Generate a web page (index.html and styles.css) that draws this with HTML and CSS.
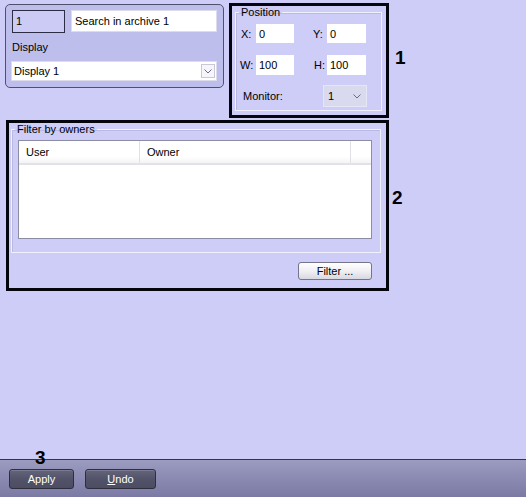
FILE: index.html
```html
<!DOCTYPE html>
<html>
<head>
<meta charset="utf-8">
<link rel="stylesheet" href="styles.css">
</head>
<body>
<div class="page">
  <div class="main">
    <div class="top-row">
      <div class="panel">
        <div class="id-row">
          <div class="field id">1</div>
          <div class="field name">Search in archive 1</div>
        </div>
        <div class="label">Display</div>
        <div class="select display">
          <span>Display 1</span>
          <span class="arrow"><svg width="8" height="5" viewBox="0 0 8 5"><polyline points="0.5,0.5 4,4 7.5,0.5" fill="none" stroke="#6a6a88" stroke-width="1"/></svg></span>
        </div>
      </div>
      <div class="box box1">
        <fieldset class="group pos">
          <legend>Position</legend>
          <div class="prow r1">
            <span class="lbl l1">X:</span><span class="inp i1">0</span>
            <span class="lbl l2">Y:</span><span class="inp i2">0</span>
          </div>
          <div class="prow r2">
            <span class="lbl l1">W:</span><span class="inp i1">100</span>
            <span class="lbl l2">H:</span><span class="inp i2">100</span>
          </div>
          <div class="mrow">
            <span class="mlbl">Monitor:</span>
            <span class="msel"><span>1</span><svg width="8" height="5" viewBox="0 0 8 5"><polyline points="0.5,0.5 4,4 7.5,0.5" fill="none" stroke="#6a6a88" stroke-width="1"/></svg></span>
          </div>
        </fieldset>
      </div>
      <div class="note n1">1</div>
    </div>
    <div class="mid-row">
      <div class="box box2">
        <fieldset class="group owners">
          <legend>Filter by owners</legend>
          <div class="list">
            <div class="lhead">
              <div class="col user">User</div>
              <div class="col owner">Owner</div>
              <div class="col rest"></div>
            </div>
          </div>
        </fieldset>
        <div class="btnrow"><button class="filter">Filter ...</button></div>
      </div>
      <div class="note n2">2</div>
    </div>
  </div>
  <div class="bar">
    <span class="note n3">3</span>
    <button class="dbtn apply">Apply</button>
    <button class="dbtn undo"><u>U</u>ndo</button>
  </div>
</div>
</body>
</html>
```
FILE: styles.css
```css
html, body {
  margin: 0;
  padding: 0;
}
body {
  background: #cdcdf8;
  font-family: "Liberation Sans", Arial, sans-serif;
  font-size: 11px;
  color: #000;
}
.page {
  width: 526px;
  height: 497px;
  display: flex;
  flex-direction: column;
}
.main {
  flex: 1;
}
.top-row {
  display: flex;
  align-items: flex-start;
  padding-top: 3px;
}
.panel {
  margin-left: 5px;
  margin-top: 1px;
  width: 219px;
  height: 84px;
  box-sizing: border-box;
  border: 1px solid #50506c;
  border-radius: 5px;
  background: #bebeed;
  padding: 5px 6px 0 6px;
}
.id-row {
  display: flex;
}
.field {
  box-sizing: border-box;
  padding-left: 3px;
  white-space: nowrap;
}
.field.id {
  width: 53px;
  height: 23px;
  line-height: 21px;
  border: 1px solid #2c2c44;
  background: #cbcbf6;
}
.field.name {
  margin-left: 6px;
  width: 146px;
  height: 22px;
  line-height: 20px;
  border: 1px solid #dcdcec;
  background: #fff;
}
.label {
  margin-top: 7px;
  height: 14px;
  line-height: 14px;
}
.select.display {
  margin-top: 7px;
  margin-left: -1px;
  width: 206px;
  height: 20px;
  box-sizing: border-box;
  border: 1px solid #dcdcec;
  background: #fff;
  display: flex;
  align-items: center;
  justify-content: space-between;
  padding-left: 2px;
  padding-right: 1px;
}
.select .arrow {
  width: 14px;
  height: 14px;
  box-sizing: border-box;
  border: 1px solid #c8c8d8;
  background: #f6f6fa;
  display: flex;
  align-items: center;
  justify-content: center;
}
.box {
  box-sizing: border-box;
  border: 3px solid #05050d;
}
.box1 {
  margin-left: 5px;
  width: 160px;
  height: 115px;
  padding: 0 4px 4px 3px;
  display: flex;
}
.group {
  margin: 0;
  padding: 0;
  border: 1px solid #f0f0ff;
  box-shadow: inset 1px 1px 0 #b9b9e2;
  min-width: 0;
}
.group legend {
  margin-left: 3px;
  padding: 0 2px;
  line-height: 12px;
  height: 12px;
}
.pos {
  flex: 1;
}
.prow {
  display: flex;
  align-items: center;
}
.prow.r1 {
  margin-top: 6px;
  height: 19px;
}
.prow.r2 {
  margin-top: 12px;
  height: 20px;
}
.lbl.l1 {
  margin-left: 4px;
  width: 16px;
  padding-left: 1px;
  box-sizing: border-box;
}
.r2 .lbl.l1 {
  padding-left: 0;
}
.lbl.l2 {
  margin-left: 19px;
  width: 14px;
}
.r2 .lbl.l2 {
  padding-left: 1px;
  box-sizing: border-box;
}
.inp {
  height: 100%;
  background: #fff;
  box-sizing: border-box;
  padding-left: 3px;
  display: flex;
  align-items: center;
}
.inp.i1 {
  width: 38px;
}
.inp.i2 {
  width: 39px;
}
.mrow {
  display: flex;
  align-items: center;
  margin-top: 10px;
  height: 22px;
}
.mlbl {
  margin-left: 7px;
  width: 80px;
}
.msel {
  width: 44px;
  height: 22px;
  box-sizing: border-box;
  border: 1px solid #e6e6f6;
  background: #dadaee;
  display: flex;
  align-items: center;
  justify-content: space-between;
  padding-left: 4px;
  padding-right: 5px;
}
.note {
  font-weight: bold;
  font-size: 19px;
  line-height: 19px;
  color: #000;
}
.n1 {
  margin-left: 6px;
  margin-top: 45px;
}
.mid-row {
  display: flex;
  align-items: flex-start;
}
.box2 {
  margin-left: 6px;
  margin-top: 2px;
  width: 383px;
  height: 171px;
  padding: 0 14px 0 2px;
}
.owners {
  width: 370px;
  box-sizing: border-box;
  padding: 0 0 13px 0;
}
.list {
  margin-top: 5px;
  margin-left: 6px;
  width: 354px;
  height: 99px;
  box-sizing: border-box;
  border: 1px solid #8c8ca4;
  background: #fff;
}
.lhead {
  display: flex;
  height: 24px;
  box-sizing: border-box;
  border-bottom: 2px solid #e2e2e8;
  background: linear-gradient(#ffffff, #ffffff 70%, #f4f4f6);
}
.col {
  box-sizing: border-box;
  padding-left: 7px;
  line-height: 22px;
  border-right: 1px solid #e0e0e6;
}
.col.user {
  width: 121px;
}
.col.owner {
  width: 211px;
}
.col.rest {
  flex: 1;
  border-right: none;
}
.btnrow {
  display: flex;
  justify-content: flex-end;
  margin-top: 9px;
}
.filter {
  width: 74px;
  height: 18px;
  margin: 0;
  padding: 0;
  font-family: "Liberation Sans", Arial, sans-serif;
  font-size: 11px;
  color: #000;
  border: 1px solid #74748a;
  border-radius: 3px;
  background: linear-gradient(#ffffff, #f0f0f4 50%, #d8d8e0);
}
.n2 {
  margin-left: 3px;
  margin-top: 70px;
}
.bar {
  position: relative;
  height: 38px;
  box-sizing: border-box;
  border-top: 1px solid #34344a;
  background: linear-gradient(#9c9cc0, #8a8ab2 50%, #7a7aa4);
  display: flex;
  align-items: flex-start;
  padding: 9px 0 0 9px;
}
.n3 {
  position: absolute;
  left: 35px;
  top: -12px;
}
.dbtn {
  height: 20px;
  margin: 0;
  padding: 0;
  font-family: "Liberation Sans", Arial, sans-serif;
  font-size: 11px;
  color: #fff;
  border: 1px solid #2e2e3e;
  border-radius: 3px;
  background: linear-gradient(#64647a, #52526a 50%, #4c4c62);
  box-shadow: inset 0 1px 0 #7a7a90;
}
.apply {
  width: 65px;
}
.undo {
  width: 71px;
  margin-left: 11px;
}
```
